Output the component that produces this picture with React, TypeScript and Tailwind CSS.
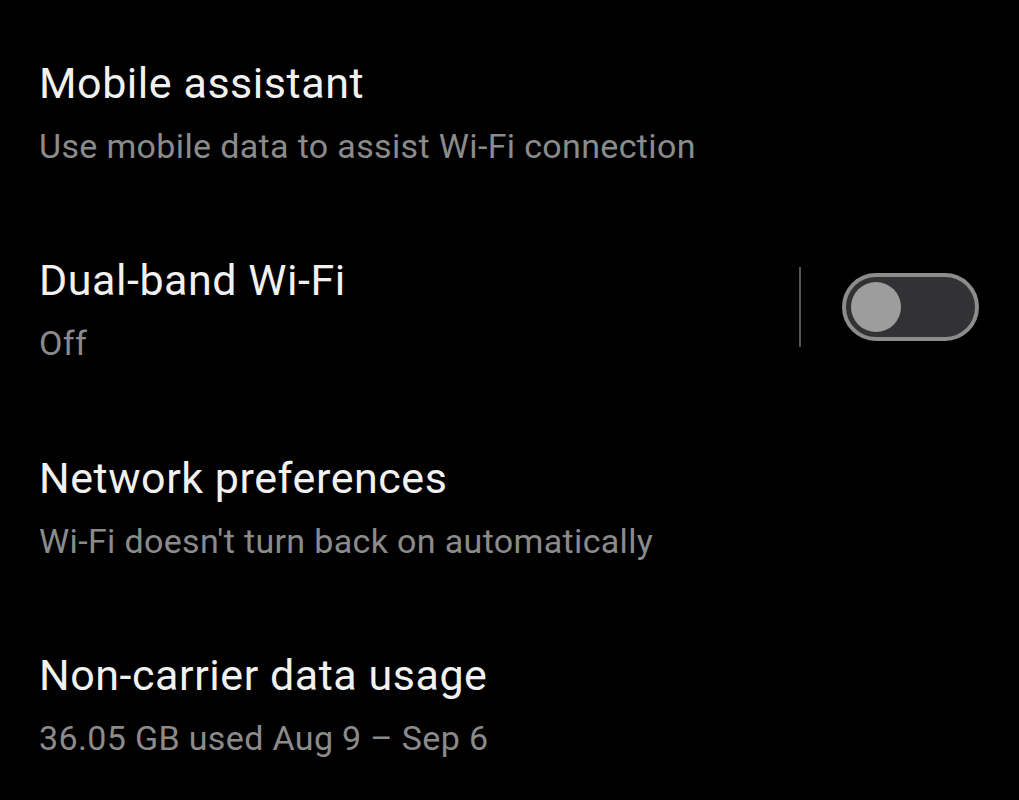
import React from "react";

function Row({ title, sub, right }: { title: string; sub: string; right?: React.ReactNode }) {
  return (
    <div className="flex items-center h-[197.5px] pl-[39px] pr-[40px]">
      <div className="flex flex-col flex-1 gap-[17px]">
        <div className="text-[43px] leading-[52px] tracking-[0.55px] text-[#f1f1f1]">{title}</div>
        <div className="text-[34px] leading-[40px] tracking-[0.35px] text-[#8b8b8b]">{sub}</div>
      </div>
      {right}
    </div>
  );
}

export default function App() {
  return (
    <div className="w-[1019px] h-[800px] bg-black overflow-hidden pt-[12.5px]" style={{ fontFamily: "Roboto, 'Noto Sans', sans-serif" }}>
      <Row title="Mobile assistant" sub="Use mobile data to assist Wi-Fi connection" />
      <Row
        title="Dual-band Wi-Fi"
        sub="Off"
        right={
          <div className="flex items-center gap-[41px] -mt-[3.5px]">
            <div className="w-[2px] h-[80px] bg-[#555555]" />
            <div className="w-[137px] h-[68px] rounded-full border-[4px] border-[#8c8c8c] bg-[#323235] flex items-center pl-[5px]">
              <div className="w-[50px] h-[50px] rounded-full bg-[#9d9d9d]" />
            </div>
          </div>
        }
      />
      <Row title="Network preferences" sub="Wi-Fi doesn't turn back on automatically" />
      <Row title="Non-carrier data usage" sub="36.05 GB used Aug 9 – Sep 6" />
    </div>
  );
}
